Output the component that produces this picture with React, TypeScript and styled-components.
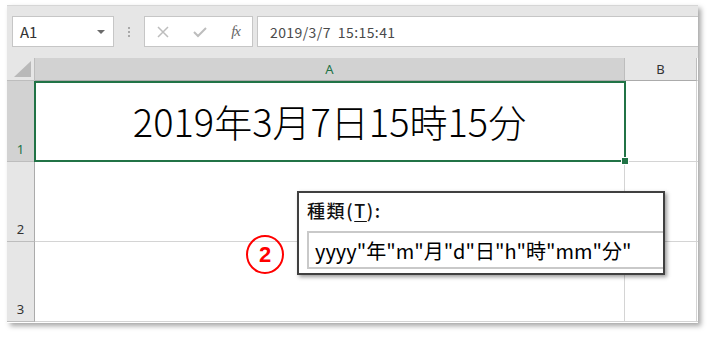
import React from "react";
import styled, { createGlobalStyle } from "styled-components";

const GlobalStyle = createGlobalStyle`
  html, body {
    margin: 0;
    padding: 0;
    background: #ffffff;
  }
  body {
    font-family: "Noto Sans CJK JP", "Noto Sans", sans-serif;
  }
`;

const Page = styled.div`
  width: 710px;
  height: 337px;
  padding: 5px 0 0 7px;
  box-sizing: border-box;
  overflow: hidden;
`;

const Window = styled.div`
  position: relative;
  width: 691px;
  height: 318px;
  background: #ffffff;
  box-shadow: 3px 3px 5px rgba(0, 0, 0, 0.35);
  display: flex;
  flex-direction: column;
`;

const Toolbar = styled.div`
  height: 53px;
  box-sizing: border-box;
  border-top: 1px solid #d6d6d6;
  background: #e6e6e6;
  display: flex;
  align-items: flex-start;
  padding: 10px 0 0 5px;
`;

const Box = styled.div<{ $w?: number }>`
  height: 31px;
  box-sizing: border-box;
  background: #ffffff;
  border: 1px solid #c6c6c6;
  display: flex;
  align-items: center;
  ${({ $w }) => ($w ? `width: ${$w}px;` : "flex: 1; border-right: none;")}
`;

const NameBox = styled(Box)`
  justify-content: space-between;
  padding: 0 8px 0 7px;
  font-size: 15px;
  color: #333;
`;

const Caret = styled.span`
  width: 0;
  height: 0;
  border-left: 4px solid transparent;
  border-right: 4px solid transparent;
  border-top: 4px solid #6a6a6a;
`;

const Dots = styled.div`
  width: 30px;
  height: 31px;
  display: flex;
  flex-direction: column;
  align-items: center;
  justify-content: center;
  gap: 2px;
  span {
    width: 2px;
    height: 2px;
    background: #a8a8a8;
  }
`;

const FxGroup = styled(Box)`
  justify-content: space-between;
  padding: 0 12px 0 12px;
  margin-right: 4px;
`;

const FxText = styled.span`
  font-family: "Liberation Serif", serif;
  font-style: italic;
  font-size: 15px;
  color: #666;
  letter-spacing: -1px;
`;

const FormulaBox = styled(Box)`
  padding-left: 12px;
  font-size: 14px;
  letter-spacing: 0.4px;
  color: #4a4a4a;
  white-space: pre;
`;

const Sheet = styled.div`
  position: relative;
  flex: 1;
  display: grid;
  grid-template-columns: 28px 590px 72px 1fr;
  grid-template-rows: 23px 81px 80px 80px;
  overflow: hidden;
`;

const Corner = styled.div`
  position: relative;
  background: #e6e6e6;
  border-right: 1px solid #bdbdbd;
  border-bottom: 1px solid #bdbdbd;
  box-sizing: border-box;
  &::after {
    content: "";
    position: absolute;
    right: 3px;
    bottom: 3px;
    width: 0;
    height: 0;
    border-left: 17px solid transparent;
    border-bottom: 16px solid #b9b9b9;
  }
`;

const ColHead = styled.div<{ $active?: boolean }>`
  background: ${({ $active }) => ($active ? "#d2d2d2" : "#e6e6e6")};
  color: ${({ $active }) => ($active ? "#217346" : "#333")};
  border-right: 1px solid #bdbdbd;
  border-bottom: 1px solid #ababab;
  box-sizing: border-box;
  display: flex;
  align-items: center;
  justify-content: center;
  font-family: "Noto Sans", sans-serif;
  font-size: 13px;
`;

const RowHead = styled.div<{ $active?: boolean }>`
  background: ${({ $active }) => ($active ? "#d2d2d2" : "#e6e6e6")};
  color: ${({ $active }) => ($active ? "#217346" : "#333")};
  border-right: 1px solid #ababab;
  border-bottom: 1px solid #bdbdbd;
  box-sizing: border-box;
  display: flex;
  align-items: flex-end;
  justify-content: center;
  padding-bottom: 3px;
  font-family: "Noto Sans", sans-serif;
  font-size: 13px;
`;

const Cell = styled.div`
  border-right: 1px solid #d4d4d4;
  border-bottom: 1px solid #d4d4d4;
  box-sizing: border-box;
`;

const Filler = styled.div`
  border-bottom: 1px solid #d4d4d4;
`;

const ActiveCell = styled(Cell)`
  position: relative;
  display: flex;
  align-items: center;
  justify-content: center;
  font-size: 38px;
  font-weight: 300;
  color: #000;
  padding-bottom: 2px;
  &::after {
    content: "";
    position: absolute;
    left: -1px;
    top: 0;
    right: -2px;
    bottom: -1px;
    border: 2px solid #217346;
  }
`;

const FillHandle = styled.span`
  position: absolute;
  right: -5px;
  bottom: -4px;
  width: 6px;
  height: 6px;
  background: #217346;
  border: 1px solid #fff;
  z-index: 2;
`;

const Badge = styled.div`
  position: absolute;
  left: 239px;
  top: 177px;
  width: 38px;
  height: 39px;
  box-sizing: border-box;
  border: 2.5px solid #ff0000;
  border-radius: 50%;
  display: flex;
  align-items: center;
  justify-content: center;
  font-family: "Liberation Sans", sans-serif;
  font-weight: bold;
  font-size: 22px;
  color: #ff0000;
`;

const Popup = styled.div`
  position: absolute;
  left: 290px;
  top: 133px;
  width: 368px;
  height: 84px;
  box-sizing: border-box;
  background: #fff;
  border: 2px solid #404040;
  box-shadow: 2px 2px 4px rgba(0, 0, 0, 0.4);
  overflow: hidden;
  padding: 5px 0 0 8px;
`;

const Label = styled.div`
  font-size: 18px;
  line-height: 24px;
  font-weight: 500;
  color: #111;
  letter-spacing: 1.6px;
  u {
    text-decoration: underline;
    text-underline-offset: 3px;
  }
`;

const Input = styled.div`
  margin-top: 9px;
  height: 38px;
  width: 380px;
  box-sizing: border-box;
  border: 2px solid #c9c9c9;
  border-right: none;
  padding-left: 6px;
  display: flex;
  align-items: center;
  font-size: 20px;
  color: #000;
  white-space: pre;
`;

export default function App() {
  return (
    <Page>
      <GlobalStyle />
      <Window>
        <Toolbar>
          <NameBox $w={102}>
            A1
            <Caret />
          </NameBox>
          <Dots>
            <span />
            <span />
            <span />
          </Dots>
          <FxGroup $w={109}>
            <svg width="12" height="12" viewBox="0 0 12 12">
              <path d="M1 1L11 11M11 1L1 11" stroke="#bdbdbd" strokeWidth="1.5" />
            </svg>
            <svg width="14" height="12" viewBox="0 0 14 12">
              <path d="M1 6L5 10L13 2" stroke="#bdbdbd" strokeWidth="2" fill="none" />
            </svg>
            <FxText>fx</FxText>
          </FxGroup>
          <FormulaBox>2019/3/7  15:15:41</FormulaBox>
        </Toolbar>
        <Sheet>
          <Corner />
          <ColHead $active>A</ColHead>
          <ColHead>B</ColHead>
          <Filler />

          <RowHead $active>1</RowHead>
          <ActiveCell>
            2019年3月7日15時15分
            <FillHandle />
          </ActiveCell>
          <Cell />
          <Filler />

          <RowHead>2</RowHead>
          <Cell />
          <Cell />
          <Filler />

          <RowHead>3</RowHead>
          <Cell />
          <Cell />
          <Filler />

          <Badge>2</Badge>
          <Popup>
            <Label>
              種類(<u>T</u>):
            </Label>
            <Input>yyyy"年"m"月"d"日"h"時"mm"分"</Input>
          </Popup>
        </Sheet>
      </Window>
    </Page>
  );
}
